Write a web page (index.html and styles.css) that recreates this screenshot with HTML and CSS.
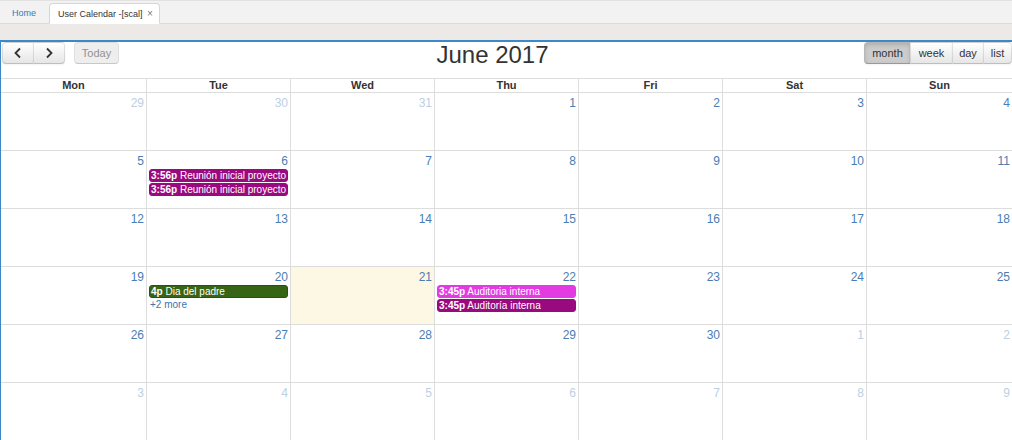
FILE: index.html
```html
<!DOCTYPE html>
<html>
<head>
<meta charset="utf-8">
<link rel="stylesheet" href="styles.css">
</head>
<body>
<div class="tabbar">
  <span class="tab tab-home">Home</span>
  <span class="tab tab-active">User Calendar -[scal] <span class="tab-x">×</span></span>
</div>
<div class="band"></div>
<div class="panel">
  <div class="toolbar">
    <div class="tb-left">
      <div class="btn-group">
        <button class="btn btn-first"><svg width="10" height="12" viewBox="0 0 10 12"><path d="M7 1.5 L2.5 6 L7 10.5" fill="none" stroke="#333" stroke-width="1.8"/></svg></button>
        <button class="btn btn-last"><svg width="10" height="12" viewBox="0 0 10 12"><path d="M3 1.5 L7.5 6 L3 10.5" fill="none" stroke="#333" stroke-width="1.8"/></svg></button>
      </div>
      <button class="btn btn-today">Today</button>
    </div>
    <div class="tb-center"><h2 class="title">June 2017</h2></div>
    <div class="tb-right">
      <div class="btn-group">
        <button class="btn btn-first btn-active w-month">month</button>
        <button class="btn w-week">week</button>
        <button class="btn w-day">day</button>
        <button class="btn btn-last w-list">list</button>
      </div>
    </div>
  </div>
  <div class="cal">
    <div class="hd">Mon</div><div class="hd">Tue</div><div class="hd">Wed</div><div class="hd">Thu</div><div class="hd">Fri</div><div class="hd">Sat</div><div class="hd">Sun</div>

    <div class="day other"><div class="num">29</div></div>
    <div class="day other"><div class="num">30</div></div>
    <div class="day other"><div class="num">31</div></div>
    <div class="day"><div class="num">1</div></div>
    <div class="day"><div class="num">2</div></div>
    <div class="day"><div class="num">3</div></div>
    <div class="day"><div class="num">4</div></div>

    <div class="day"><div class="num">5</div></div>
    <div class="day"><div class="num">6</div>
      <div class="ev ev-purple"><b>3:56p</b> Reunión inicial proyecto</div>
      <div class="ev ev-purple"><b>3:56p</b> Reunión inicial proyecto</div>
    </div>
    <div class="day"><div class="num">7</div></div>
    <div class="day"><div class="num">8</div></div>
    <div class="day"><div class="num">9</div></div>
    <div class="day"><div class="num">10</div></div>
    <div class="day"><div class="num">11</div></div>

    <div class="day"><div class="num">12</div></div>
    <div class="day"><div class="num">13</div></div>
    <div class="day"><div class="num">14</div></div>
    <div class="day"><div class="num">15</div></div>
    <div class="day"><div class="num">16</div></div>
    <div class="day"><div class="num">17</div></div>
    <div class="day"><div class="num">18</div></div>

    <div class="day"><div class="num">19</div></div>
    <div class="day"><div class="num">20</div>
      <div class="ev ev-green"><b>4p</b> Dia del padre</div>
      <a class="more">+2 more</a>
    </div>
    <div class="day today"><div class="num">21</div></div>
    <div class="day"><div class="num">22</div>
      <div class="ev ev-pink"><b>3:45p</b> Auditoria interna</div>
      <div class="ev ev-purple"><b>3:45p</b> Auditoría interna</div>
    </div>
    <div class="day"><div class="num">23</div></div>
    <div class="day"><div class="num">24</div></div>
    <div class="day"><div class="num">25</div></div>

    <div class="day"><div class="num">26</div></div>
    <div class="day"><div class="num">27</div></div>
    <div class="day"><div class="num">28</div></div>
    <div class="day"><div class="num">29</div></div>
    <div class="day"><div class="num">30</div></div>
    <div class="day other"><div class="num">1</div></div>
    <div class="day other"><div class="num">2</div></div>

    <div class="day other"><div class="num">3</div></div>
    <div class="day other"><div class="num">4</div></div>
    <div class="day other"><div class="num">5</div></div>
    <div class="day other"><div class="num">6</div></div>
    <div class="day other"><div class="num">7</div></div>
    <div class="day other"><div class="num">8</div></div>
    <div class="day other"><div class="num">9</div></div>
  </div>
</div>
</body>
</html>
```
FILE: styles.css
```css
html, body {
  margin: 0;
  padding: 0;
  width: 1012px;
  height: 440px;
  overflow: hidden;
  background: #fff;
  font-family: "Liberation Sans", Arial, sans-serif;
  color: #333;
}

.tabbar {
  background: #f2f2f2;
  border-top: 1px solid #e2e2e2;
  border-bottom: 1px solid #dadada;
  box-sizing: border-box;
  height: 24px;
  display: flex;
  align-items: flex-end;
  padding-left: 4px;
}
.tab {
  font-size: 9px;
  height: 20px;
  line-height: 19px;
  box-sizing: border-box;
  margin-bottom: -1px;
}
.tab-home {
  color: #2f7bc0;
  padding: 0 13px 0 8px;
}
.tab-active {
  background: #fff;
  border: 1px solid #d6d6d6;
  border-bottom-color: #fff;
  border-radius: 4px 4px 0 0;
  padding: 0 5px 0 8px;
  height: 21px;
  width: 111px;
  color: #333;
}
.tab-x {
  color: #5a7fa8;
  font-size: 10px;
  margin-left: 2px;
}

.band {
  height: 16px;
  background: #ece9e6;
}

.panel {
  border-top: 2px solid #3b89c9;
  border-left: 1px solid #3b89c9;
  height: 400px;
  box-sizing: border-box;
}

.toolbar {
  display: flex;
  align-items: flex-start;
  height: 36px;
}
.tb-left {
  display: flex;
  gap: 9px;
  padding-left: 1px;
}
.tb-center {
  flex: 1;
  text-align: center;
}
.tb-right {
  display: flex;
}
.title {
  margin: 0;
  font-size: 24px;
  font-weight: normal;
  line-height: 26px;
  color: #333;
  padding-left: 2px;
}
.btn-group {
  display: flex;
}
.btn {
  height: 22px;
  margin: 0;
  padding: 0 6px;
  font-family: "Liberation Sans", Arial, sans-serif;
  font-size: 11px;
  color: #333;
  background: linear-gradient(#ffffff, #e6e6e6);
  border: 1px solid rgba(0,0,0,0.1);
  border-bottom-color: rgba(0,0,0,0.25);
  box-shadow: inset 0 1px 0 rgba(255,255,255,0.2), 0 1px 2px rgba(0,0,0,0.05);
  display: flex;
  align-items: center;
  justify-content: center;
  box-sizing: border-box;
  border-radius: 0;
}
.btn + .btn { margin-left: -1px; }
.btn-first { border-radius: 4px 0 0 4px; }
.btn-last { border-radius: 0 4px 4px 0; }
.tb-left .btn-group .btn { width: 32px; }
.btn-today {
  width: 45px;
  border-radius: 4px;
  opacity: 0.65;
  background: #e6e6e6;
  box-shadow: none;
  color: #555;
}
.btn-active {
  background: #cccccc;
  box-shadow: inset 0 2px 4px rgba(0,0,0,0.15), 0 1px 2px rgba(0,0,0,0.05);
}
.w-month { width: 47px; }
.w-week { width: 43px; }
.w-day { width: 32px; }
.w-list { width: 29px; }

.cal {
  display: grid;
  grid-template-columns: 146px repeat(5, 144px) 1fr;
  border-top: 1px solid #dddddd;
}
.hd {
  height: 14px;
  box-sizing: border-box;
  border-right: 1px solid #dddddd;
  border-bottom: 1px solid #dddddd;
  font-size: 11px;
  font-weight: bold;
  line-height: 13px;
  text-align: center;
  color: #333;
}
.day {
  height: 58px;
  box-sizing: border-box;
  border-right: 1px solid #dddddd;
  border-bottom: 1px solid #dddddd;
  overflow: hidden;
}
.hd:nth-child(7n), .day:nth-child(7n) { border-right: none; }
.today { background: #fcf8e3; }
.num {
  text-align: right;
  font-size: 12px;
  line-height: 16px;
  padding: 2px 2px 0 0;
  height: 18px;
  box-sizing: border-box;
  color: #4a7db3;
}
.other .num { color: #bccfe3; }

.ev {
  margin: 0 2px 1px 2px;
  height: 13px;
  box-sizing: border-box;
  border-radius: 3px;
  border: 1px solid;
  font-size: 10px;
  line-height: 11px;
  color: #fff;
  padding-left: 1px;
  white-space: nowrap;
  overflow: hidden;
}
.ev b { font-weight: bold; }
.ev-purple { background: #990a7f; border-color: #990a7f; }
.ev-pink { background: #e33be2; border-color: #e33be2; }
.ev-green { background: #376516; border-color: #2c5212; }
.more {
  display: block;
  font-size: 10px;
  line-height: 12px;
  color: #3c74ae;
  padding-left: 3px;
}
```
